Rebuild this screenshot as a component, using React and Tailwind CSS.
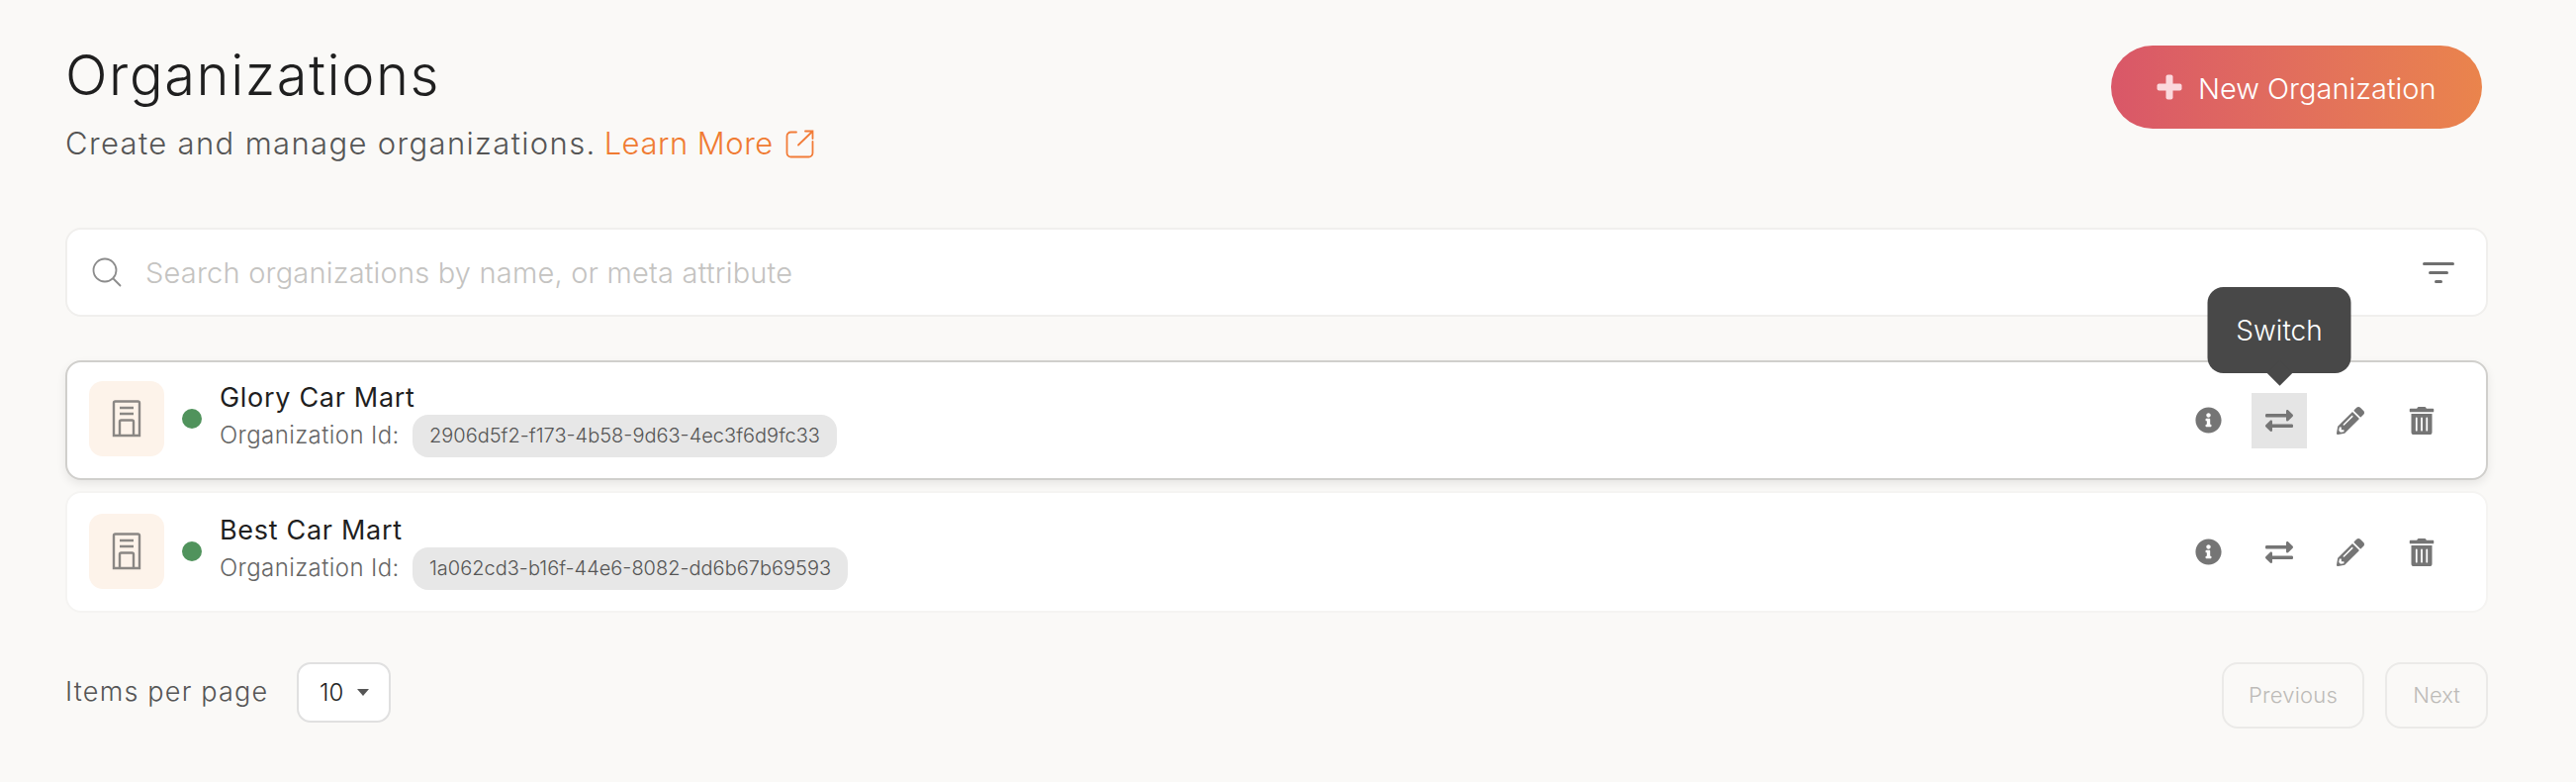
import { FaInfoCircle, FaExchangeAlt, FaPencilAlt, FaTrashAlt } from 'react-icons/fa'

const ORGS = [
  { name: 'Glory Car Mart', id: '2906d5f2-f173-4b58-9d63-4ec3f6d9fc33', hover: true },
  { name: 'Best Car Mart', id: '1a062cd3-b16f-44e6-8082-dd6b67b69593' },
]

function BuildingIcon() {
  return (
    <svg width="30" height="38" viewBox="0 0 30 38" fill="none" stroke="#8a8784" strokeWidth="2.4">
      <path d="M2 36V3a1.5 1.5 0 0 1 1.5-1.5h23A1.5 1.5 0 0 1 28 3v33z" />
      <path d="M8 8h14M8 14h14" />
      <path d="M8 36V22a1.5 1.5 0 0 1 1.5-1.5h11A1.5 1.5 0 0 1 22 22v14" />
    </svg>
  )
}

function OrgRow({ org }) {
  return (
    <div className={`flex items-center justify-between pl-[22px] pr-[37px] bg-white rounded-[16px] border-2 ${org.hover ? 'h-[121px] border-[#d0cfcc] shadow-[0_4px_10px_rgba(0,0,0,0.08)]' : 'h-[123px] border-[#f5f4f2]'}`}>
      <div className={`flex items-center ${org.hover ? 'mb-[4px]' : 'mb-[2px]'}`}>
        <div className="w-[76px] h-[76px] rounded-[14px] bg-[#fdf3ea] flex items-center justify-center">
          <BuildingIcon />
        </div>
        <div className="w-[20px] h-[20px] rounded-full bg-[#50935c] mx-[18px]" />
        <div className="flex flex-col">
          <div className="text-[27px] leading-[34px] pt-[1px] tracking-[0.7px] text-[#1f1f1f]">{org.name}</div>
          <div className="flex items-center">
            <span className="w-[195px] text-[24px] font-light tracking-[0.4px] text-[#666]">Organization Id:</span>
            <span className="h-[43px] px-[17px] rounded-[16px] bg-[#e7e7e7] text-[#555] text-[20px] font-light flex items-center">{org.id}</span>
          </div>
        </div>
      </div>
      <div className="flex items-center gap-[16px] text-[#757575]">
        <div className="w-[56px] h-[56px] flex items-center justify-center"><FaInfoCircle size={27} /></div>
        <div className="relative">
          {org.hover && (
            <div className="absolute bottom-[76px] left-1/2 -translate-x-1/2 w-[145px] h-[87px] pt-[2px] rounded-[16px] bg-[#484848] text-white text-[28px] font-light flex items-center justify-center">
              Switch
              <div className="absolute top-[78px] left-1/2 -translate-x-1/2 w-[18px] h-[18px] rotate-45 bg-[#484848]" />
            </div>
          )}
          <div className={`w-[56px] h-[56px] flex items-center justify-center ${org.hover ? 'bg-[#e5e5e5]' : ''}`}><FaExchangeAlt size={28} /></div>
        </div>
        <div className="w-[56px] h-[56px] flex items-center justify-center"><FaPencilAlt size={28} /></div>
        <div className="w-[56px] h-[56px] flex items-center justify-center"><FaTrashAlt size={28} /></div>
      </div>
    </div>
  )
}

export default function App() {
  return (
    <div className="min-h-[790px] bg-[#faf9f7] pl-[66px] pr-[89px] font-['Inter',sans-serif]">
      {/* Header */}
      <div className="flex items-start justify-between h-[230px]">
        <div>
          <h1 className="text-[56px] leading-[66px] font-light tracking-[1.6px] text-[#1f1f1f] mt-[43px]">Organizations</h1>
          <div className="flex items-center mt-[16px] text-[31px] leading-[40px] font-light text-[#555]">
            <span className="tracking-[1.35px]">Create and manage organizations.</span>
            <span className="text-[#f07b32] ml-[8px] tracking-[0.5px]">Learn More</span>
            <svg className="ml-[12px]" width="29" height="29" viewBox="0 0 29 29" fill="none" stroke="#f27c38" strokeWidth="1.8" strokeLinecap="round">
              <path d="M11 2.5H5.5a4 4 0 0 0-4 4v17a4 4 0 0 0 4 4h18a4 4 0 0 0 4-4V12" />
              <path d="M13 15.5 27.5 1.5M20 1.5h7.5V9" />
            </svg>
          </div>
        </div>
        <button className="mt-[46px] mr-[6px] w-[375px] h-[84px] rounded-full bg-gradient-to-r from-[#d95768] to-[#ea844c] flex items-center pl-[46px] text-white text-[29px] font-light">
          <svg width="26" height="26" viewBox="0 0 26 26" fill="#fbd9dd">
            <rect x="9.5" y="0.5" width="7" height="25" rx="2" />
            <rect x="0.5" y="9.5" width="25" height="7" rx="2" />
          </svg>
          <span className="ml-[16px] pt-[3px]">New Organization</span>
        </button>
      </div>

      {/* Search */}
      <div className="flex items-center h-[90px] bg-white rounded-[16px] border-2 border-[#f0efed] pl-[25px] pr-[31px]">
        <svg width="30" height="30" viewBox="0 0 30 30" fill="none" stroke="#8c8c8c" strokeWidth="1.8" strokeLinecap="round">
          <circle cx="13" cy="13" r="11.5" />
          <path d="m21.5 21.5 7 7" />
        </svg>
        <span className="ml-[24px] flex-1 pt-[2px] text-[29px] tracking-[0.2px] font-light text-[#c4c3c1]">Search organizations by name, or meta attribute</span>
        <svg width="34" height="24" viewBox="0 0 34 24" fill="#6f6f6f">
          <rect x="1" y="2" width="32" height="3" rx="1.5" />
          <rect x="7" y="11" width="20" height="3" rx="1.5" />
          <rect x="13" y="20" width="8" height="3" rx="1.5" />
        </svg>
      </div>

      {/* List */}
      <div className="flex flex-col gap-[11px] mt-[44px]">
        {ORGS.map(org => <OrgRow key={org.id} org={org} />)}
      </div>

      {/* Pagination */}
      <div className="flex items-start justify-between mt-[50px]">
        <div className="flex items-center">
          <span className="w-[234px] text-[27px] tracking-[1.2px] font-light text-[#555]">Items per page</span>
          <div className="w-[95px] h-[61px] rounded-[14px] bg-white border-2 border-[#e0e0e0] flex items-center pl-[21px] text-[24px] font-light text-[#222]">
            10
            <svg className="ml-[14px]" width="12" height="7" viewBox="0 0 12 7" fill="#555"><path d="M0 0h12L6 7z" /></svg>
          </div>
        </div>
        <div className="flex gap-[21px]">
          <div className="w-[144px] h-[67px] rounded-[16px] border-2 border-[#ebeae8] flex items-center justify-center text-[22px] tracking-[0.2px] font-light text-[#bdbbb8]">Previous</div>
          <div className="w-[104px] h-[67px] rounded-[16px] border-2 border-[#ebeae8] flex items-center justify-center text-[22px] font-light text-[#bdbbb8]">Next</div>
        </div>
      </div>
    </div>
  )
}
